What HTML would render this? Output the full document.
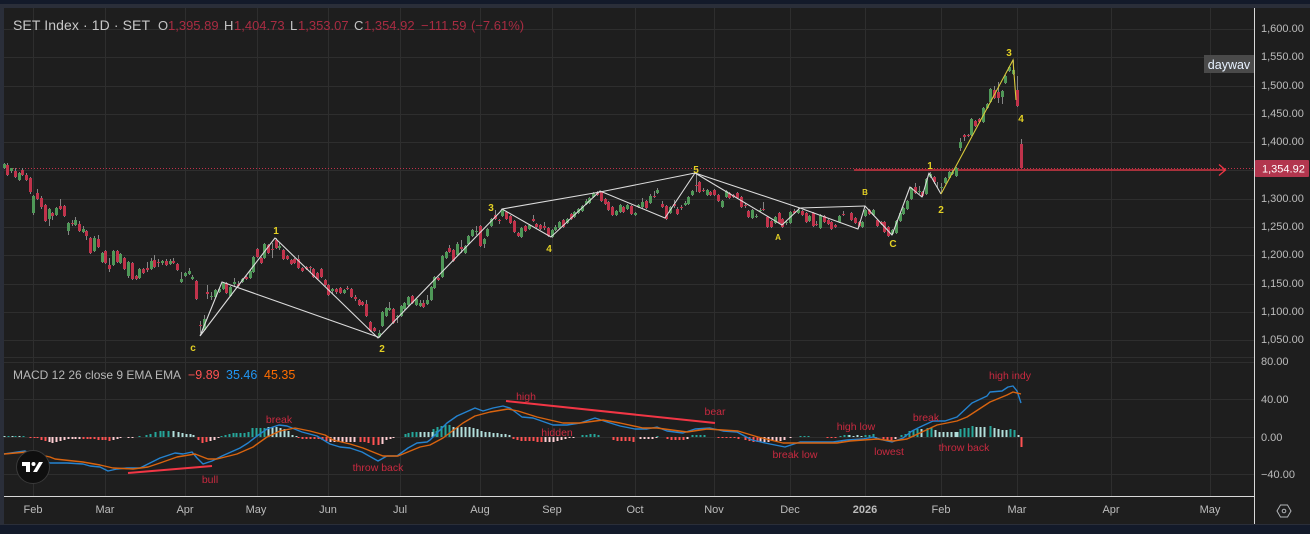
<!DOCTYPE html>
<html lang="en"><head><meta charset="utf-8"><title>SET Index chart</title>
<style>
html,body{margin:0;padding:0;background:#131a2a;width:1310px;height:534px;overflow:hidden}
svg{display:block}
text{font-family:"Liberation Sans",sans-serif}
.ax{font-size:11px;fill:#bcbcbc}
.tm{font-size:11px;fill:#bcbcbc;text-anchor:middle}
.lb{font-size:10.5px;fill:#c92a40;text-anchor:middle}
.wv{font-size:10px;font-weight:bold;fill:#e3d024;text-anchor:middle}
.lv{font-size:13px;fill:#a92c42}
.ll{font-size:13px;fill:#c4c4c4}
</style></head><body>
<svg width="1310" height="534" viewBox="0 0 1310 534" xmlns="http://www.w3.org/2000/svg">
<rect width="1310" height="534" fill="#131a2a"/>
<rect y="4" width="1310" height="4" fill="#2a2e39"/>
<rect x="0" y="4" width="4" height="521" fill="#2a2e39"/>
<rect x="4" y="8" width="1306" height="516" fill="#1e1e1e"/>
<rect y="524" width="1310" height="1" fill="#2a2e39"/>
<!-- grid -->
<path fill="none" stroke="#2e2e2e" stroke-width="1" d="M33.5 8V496M105.5 8V496M185.5 8V496M257.5 8V496M328.5 8V496M400.5 8V496M480.5 8V496M552.5 8V496M635.5 8V496M714.5 8V496M790.5 8V496M865.5 8V496M941.5 8V496M1017.5 8V496M1111.5 8V496M1210.5 8V496M4 29.5H1254M4 57.5H1254M4 86.5H1254M4 114.5H1254M4 142.5H1254M4 170.5H1254M4 199.5H1254M4 227.5H1254M4 255.5H1254M4 284.5H1254M4 312.5H1254M4 340.5H1254M4 357.5H1254M4 362.5H1254M4 399.5H1254M4 437.5H1254M4 474.5H1254"/>
<path fill="none" stroke="#d8d8d8" stroke-width="1" d="M4 496.5H1254M1254.5 8V524"/>
<!-- price lines -->
<path fill="none" stroke="#c2324b" stroke-width="1" stroke-dasharray="1 2" d="M4 168.5H1254"/>
<path fill="none" stroke="#f23645" stroke-width="1.2" d="M854 170H1225M1219 164.5L1225.5 170L1219 175.5"/>
<g transform="translate(.5 0)">
<!-- wicks -->
<path fill="none" stroke="#858585" stroke-width="1" d="M4 163V169M7 163V176M11 168V173M15 168V178M19 172V181M22 168V176M26 173V181M30 177V194M33 195V215M37 189V200M41 196V209M45 204V222M49 208V226M52 212V220M56 207V216M60 199V210M64 205V217M68 222V235M72 220V226M75 217V226M79 221V232M83 226V233M86 230V240M90 237V254M94 236V252M98 235V248M102 252V263M105 250V264M109 258V272M113 250V266M117 250V263M120 253V264M124 257V270M128 261V278M132 262V280M136 275V280M139 268V279M143 268V274M147 262V272M151 258V270M154 255V268M158 259V267M162 260V265M166 259V266M170 259V265M173 258V264M177 263V271M181 272V283M185 272V277M189 268V275M192 275V280M196 280V300M200 321V333M204 315V331M207 285V299M211 292V300M215 289V298M219 288V293M223 282V290M226 282V294M230 286V297M234 278V287M238 281V287M242 278V283M246 276V280M250 270V279M253 256V273M257 248V258M261 257V264M264 243V259M268 244V254M272 243V258M276 238V249M279 243V250M283 249V260M287 255V260M291 259V265M294 258V264M298 255V269M302 267V272M306 266V270M310 266V272M313 268V278M317 272V280M321 268V278M325 279V286M328 284V296M332 288V294M336 288V294M340 287V294M344 289V294M347 286V290M351 288V298M355 295V301M359 299V306M362 301V306M366 300V317M370 321V332M374 327V332M379 330V338M382 311V327M386 307V317M389 302V311M393 308V324M397 315V323M401 305V317M404 302V310M408 296V306M412 295V304M416 298V306M420 300V307M423 300V308M427 295V305M431 286V301M434 276V289M438 277V281M442 255V278M446 251V259M449 245V253M453 249V262M457 242V256M461 240V253M465 245V254M468 235V245M472 229V237M476 226V235M480 225V247M484 238V248M487 228V237M491 218V227M495 210V220M499 219V224M502 209V217M506 211V220M510 215V224M514 220V233M518 232V237M521 227V238M525 225V232M529 224V230M533 215V222M536 223V228M540 224V230M544 222V230M548 227V237M552 229V238M555 225V231M559 221V229M563 219V228M567 218V224M571 213V220M574 211V218M578 208V214M582 205V212M586 199V205M589 197V204M593 192V198M597 191V196M601 191V202M605 198V205M608 201V211M612 206V216M616 210V216M620 204V213M623 206V213M627 204V210M631 205V215M635 212V216M638 204V208M642 198V208M646 200V209M650 194V204M654 191V198M657 188V194M662 201V208M666 205V220M670 206V214M674 200V208M677 207V215M681 205V210M685 201V206M688 196V205M692 190V196M696 174V192M699 181V193M703 188V192M707 189V196M710 191V196M714 189V196M718 194V202M722 200V208M726 190V198M729 192V199M733 194V198M737 192V199M741 196V208M745 203V208M748 210V218M752 209V219M756 214V218M760 208V212M763 202V211M767 216V228M771 220V228M775 216V224M779 212V224M782 218V228M786 220V225M790 211V224M794 209V214M798 208V214M802 210V216M806 212V223M809 215V222M813 212V227M816 221V226M820 214V229M824 215V223M828 219V225M831 221V230M835 224V228M839 215V223M843 211V216M851 212V221M855 217V224M859 221V227M862 221V228M865 209V217M869 209V215M873 209V216M877 219V227M881 221V225M884 221V233M888 226V237M892 229V235M896 220V234M900 212V222M903 207V215M907 200V210M911 187V200M915 183V194M919 186V194M922 191V197M926 178V195M930 172V178M934 176V184M937 182V188M941 183V193M945 177V184M949 171V179M952 170V175M956 167V177M960 138V151M964 134V141M968 134V137M971 118V136M975 120V127M979 118V123M983 107V123M987 103V109M990 88V103M994 86V99M998 82V103M1002 90V104M1005 75V84M1009 66V72M1013 60V75M1017 76V107M1021 139V168"/>
<!-- green bodies -->
<path fill="none" stroke="#4f9858" stroke-width="3" d="M4 164V168M11 168V171M19 173V180M33 196V213M49 209V219M56 208V215M68 223V231M75 220V225M83 229V232M94 238V251M102 253V262M113 251V265M120 254V263M128 262V276M139 269V278M151 261V269M162 261V263M170 261V264M181 279V282M185 273V276M189 271V274M192 277V279M204 319V330M211 296V297M215 290V297M219 289V292M223 283V289M230 287V296M234 282V284M242 279V282M250 271V278M253 257V272M264 244V258M279 246V248M332 289V291M344 290V293M379 333V337M382 312V326M386 308V316M389 308V310M397 316V317M401 306V316M404 303V309M408 297V305M416 299V305M420 303V306M427 300V304M431 287V300M434 277V288M442 256V277M446 252V258M457 244V255M465 246V253M468 236V244M472 230V236M476 231V232M484 239V244M487 229V236M491 219V226M502 210V216M521 228V237M529 225V229M552 230V237M555 227V230M559 222V228M567 219V223M574 212V217M578 209V213M582 206V211M586 201V204M589 198V203M593 193V197M616 211V215M620 205V212M627 205V209M635 213V215M638 205V207M642 202V207M650 196V203M657 190V193M670 207V213M685 203V205M688 197V204M692 191V195M707 190V195M722 201V207M726 191V197M752 210V218M756 216V217M760 210V211M775 217V223M786 222V223M790 212V223M798 210V213M809 216V221M820 215V228M839 216V222M862 222V227M865 210V216M873 210V215M892 230V234M896 221V233M900 213V221M903 208V214M907 201V209M911 188V199M919 191V192M926 179V194M930 174V177M941 187V188M945 178V183M949 172V178M952 172V174M956 168V176M960 142V148M971 119V135M983 108V122M987 104V108M990 89V102M1002 91V97M1005 76V83M1009 67V71M1013 70V74"/>
<!-- red bodies -->
<path fill="none" stroke="#c0334b" stroke-width="3" d="M7 165V175M15 171V177M22 170V175M26 175V180M30 178V192M37 193V199M41 198V207M45 205V221M52 213V216M60 206V209M64 206V216M72 223V224M79 224V231M86 231V236M90 238V253M98 239V247M105 251V263M109 265V269M117 251V262M124 258V269M132 263V279M136 276V279M143 269V273M147 268V270M154 260V267M158 262V263M166 261V265M173 261V263M177 264V270M196 281V299M200 325V326M207 292V294M226 283V293M238 284V286M246 277V279M257 249V257M261 258V263M268 245V253M272 249V250M276 240V248M283 250V259M287 256V259M291 260V264M294 259V263M298 259V268M302 268V271M306 267V269M310 267V268M313 269V277M317 273V279M321 269V277M325 280V285M328 285V295M336 289V292M340 288V293M347 288V289M351 289V297M355 297V299M359 300V305M362 302V305M366 304V316M370 322V331M374 328V331M393 309V323M412 296V303M423 303V307M438 278V280M449 248V252M453 250V261M461 247V249M480 226V246M495 215V219M499 220V221M506 212V219M510 216V223M514 221V232M518 233V236M525 226V231M533 219V221M536 224V227M540 225V229M544 226V228M548 228V236M563 220V227M571 214V219M597 193V195M601 192V201M605 199V204M608 202V210M612 207V215M623 207V212M631 206V214M646 201V208M654 196V197M662 204V207M666 206V219M674 204V206M677 209V214M681 207V208M696 185V186M699 182V192M703 190V191M710 192V195M714 190V195M718 195V201M729 193V198M733 195V197M737 193V198M741 197V207M745 205V206M748 211V217M763 209V210M767 217V227M771 221V227M779 213V223M782 219V227M794 211V213M802 211V215M806 213V222M813 213V226M816 224V225M824 216V222M828 220V224M831 222V229M835 225V227M843 214V215M851 213V220M855 218V223M859 222V226M869 210V214M877 220V226M881 222V224M884 222V232M888 227V236M915 187V193M922 192V196M934 177V182M964 135V137M968 135V136M975 121V126M979 119V122M994 90V98M998 92V98M1017 90V106M1021 144V168"/>
</g>
<!-- wave lines -->
<g fill="none" stroke="#dcdcdc" stroke-width="1.1" stroke-linejoin="round">
<path d="M200 336L222 282L378 337M200 336L238 286L275 238L378 338L500 212L502 209L551 237L600 191L665 218L695 173L782 225L800 208L858 229L865 206L892 235L910 187L922 197L929 173L941 194"/>
<path d="M502 209L600 192L695 173L800 208L865 206"/>
</g>
<path fill="none" stroke="#d8c93a" stroke-width="1.1" d="M941 194L1013 60L1016 100"/>
<!-- wave labels -->
<text class="wv" x="276" y="234">1</text><text class="wv" x="382" y="352">2</text><text class="wv" x="193" y="351">c</text><text class="wv" x="491" y="211">3</text><text class="wv" x="549" y="252">4</text><text class="wv" x="696" y="173">5</text><text class="wv" x="778" y="240" style="font-size:8px">A</text><text class="wv" x="865" y="195" style="font-size:8px">B</text><text class="wv" x="893" y="247">C</text><text class="wv" x="930" y="169">1</text><text class="wv" x="941" y="213">2</text><text class="wv" x="1009" y="56">3</text><text class="wv" x="1021" y="122">4</text>
<!-- MACD histogram -->
<g fill="none" stroke-width="2" transform="translate(.5 0)">
<path stroke="#26a69a" d="M8 436V437M15 436V437M23 436V437M139 436V437M146 435V437M150 434V437M155 432V437M160 431V437M163 431V437M168 431V437M221 436V437M225 435V437M229 434V437M233 433V437M236 433V437M240 433V437M244 433V437M248 432V437M252 428V437M256 428V437M260 428V437M264 428V437M405 434V437M408 433V437M412 432V437M416 432V437M436 431V437M433 429V437M437 427V437M441 426V437M445 425V437M449 425V437M582 435V437M586 435V437M590 434V437M594 434V437M598 435V437M657 436V437M692 435V437M696 435V437M700 435V437M704 435V437M800 436V437M804 436V437M808 436V437M840 436V437M844 435V437M848 435V437M865 435V437M869 435V437M873 434V437M901 435V437M905 434V437M909 431V437M913 430V437M917 429V437M927 428V437M931 428V437M960 429V437M964 428V437M968 428V437M972 426V437M990 426V437M1010 429V437M1014 430V437"/>
<path stroke="#b2dfdb" d="M4 436V437M12 436V437M19 436V437M173 431V437M178 432V437M182 433V437M186 434V437M190 434V437M193 435V437M268 427V437M272 427V437M276 427V437M280 428V437M284 429V437M288 431V437M292 435V437M296 436V437M420 432V437M424 432V437M428 432V437M432 432V437M453 427V437M457 427V437M461 427V437M465 427V437M469 427V437M473 428V437M477 429V437M481 431V437M485 432V437M489 432V437M493 433V437M497 433V437M501 434V437M505 434V437M509 435V437M849 435V437M853 436V437M857 435V437M861 436V437M921 429V437M935 430V437M939 432V437M943 432V437M947 432V437M951 432V437M955 432V437M957 432V437M976 427V437M980 427V437M984 427V437M994 428V437M998 429V437M1002 430V437M1006 430V437M1018 435V437"/>
<path stroke="#ff5252" d="M30 437V438M34 437V438M37 437V438M41 437V440M45 437V441M83 437V439M87 437V439M90 437V439M94 437V439M98 437V440M102 437V440M105 437V440M109 437V441M198 437V440M202 437V443M206 437V442M298 437V438M302 437V439M306 437V439M310 437V439M314 437V439M318 437V439M322 437V440M326 437V441M360 437V442M364 437V442M368 437V443M373 437V445M378 437V445M513 437V439M517 437V440M521 437V441M525 437V441M529 437V441M533 437V441M537 437V442M541 437V442M613 437V440M617 437V441M621 437V441M625 437V441M629 437V441M633 437V442M667 437V439M671 437V440M675 437V440M679 437V440M683 437V440M718 437V438M722 437V438M726 437V438M730 437V438M734 437V438M738 437V439M745 437V440M749 437V441M753 437V442M757 437V442M827 437V438M831 437V438M835 437V438M883 437V439M887 437V440M891 437V440M1021 437V447"/>
<path stroke="#ffcdd2" d="M49 437V442M52 437V443M56 437V442M60 437V441M64 437V440M68 437V439M72 437V439M75 437V439M79 437V439M113 437V440M117 437V439M120 437V438M128 437V438M132 437V438M210 437V441M214 437V440M218 437V438M330 437V442M334 437V442M338 437V442M342 437V442M346 437V442M350 437V442M354 437V442M382 437V444M386 437V440M390 437V439M393 437V438M545 437V442M549 437V442M553 437V442M557 437V441M561 437V440M565 437V439M569 437V438M573 437V438M640 437V439M644 437V439M648 437V439M652 437V439M656 437V438M687 437V439M760 437V442M764 437V442M768 437V442M772 437V441M776 437V441M780 437V441M784 437V440M790 437V438M875 437V438M895 437V439"/>
</g>
<!-- MACD lines -->
<path fill="none" stroke="#2583d0" stroke-width="1.4" stroke-linejoin="round" d="M4 454L25 451L50 463L67 463L83 464L90 466L100 467L108 471L117 469L127 468L140 468L148 464L160 458L175 453L183 454L192 452L197 458L203 464L212 461L222 456L240 448L248 443L257 436L267 429L279 425L287 426L302 432L317 436L330 444L340 447L350 448L362 452L378 461L387 456L397 456L408 448L417 443L427 442L430 440L447 423L457 416L475 408L483 411L493 408L503 406L510 408L522 417L533 418L553 425L567 425L580 423L595 418L607 422L620 426L635 429L647 429L657 427L667 431L683 433L695 429L710 428L723 431L737 432L752 440L770 444L785 447L800 442L833 442L847 440L863 439L873 437L883 440L892 442L903 438L912 431L920 427L933 421L945 421L957 417L972 403L987 396L990 392L1002 391L1008 387L1013 386L1017 391L1021 403"/>
<path fill="none" stroke="#d9640f" stroke-width="1.4" stroke-linejoin="round" d="M4 454L27 452L50 457L55 459L83 462L100 465L113 468L133 469L148 467L160 463L177 457L195 454L208 459L217 459L237 454L253 447L267 437L280 431L295 428L310 431L325 435L333 440L350 444L363 448L383 456L398 456L420 447L430 445L443 438L463 423L475 416L490 412L508 409L518 411L537 417L563 423L580 423L603 420L620 423L643 428L657 428L687 432L707 429L738 431L758 437L783 443L797 443L837 443L850 441L877 439L893 441L907 439L922 432L937 425L957 421L967 417L990 402L1007 395L1013 392L1021 394"/>
<path fill="none" stroke="#f23645" stroke-width="2" d="M128 473L212 466M506 401L715 423"/>
<!-- MACD labels -->
<text class="lb" x="210" y="483">bull</text><text class="lb" x="279" y="423">break</text><text class="lb" x="378" y="471">throw back</text><text class="lb" x="526" y="400">high</text><text class="lb" x="557" y="436">hidden</text><text class="lb" x="715" y="415">bear</text><text class="lb" x="795" y="458">break low</text><text class="lb" x="856" y="430">high low</text><text class="lb" x="889" y="455">lowest</text><text class="lb" x="926" y="421">break</text><text class="lb" x="964" y="451">throw back</text><text class="lb" x="1010" y="379">high indy</text>
<!-- Logo -->
<circle cx="33" cy="467" r="16.5" fill="#0f0f0f" stroke="#3a3a3a" stroke-width="1"/>
<path fill="#fff" d="M22 462H30V472H26V466H22ZM43 462L37 472H33L39 462Z"/><circle cx="33.5" cy="464" r="2" fill="#fff"/>
<!-- Legends -->
<text x="13" y="30" style="font-size:14px" fill="#c8c8c8" textLength="137" lengthAdjust="spacing">SET Index · 1D · SET</text>
<text class="ll" x="158" y="30">O</text><text class="lv" x="168" y="30">1,395.89</text>
<text class="ll" x="224" y="30">H</text><text class="lv" x="234" y="30">1,404.73</text>
<text class="ll" x="290" y="30">L</text><text class="lv" x="298" y="30">1,353.07</text>
<text class="ll" x="354" y="30">C</text><text class="lv" x="364" y="30">1,354.92</text>
<text class="lv" x="421" y="30">−111.59</text><text class="lv" x="471" y="30">(−7.61%)</text>
<text x="13" y="379" style="font-size:12px" fill="#b8b8b8">MACD 12 26 close 9 EMA EMA</text>
<text x="188" y="379" style="font-size:12.5px" fill="#ff5252">−9.89</text>
<text x="226" y="379" style="font-size:12.5px" fill="#2196f3">35.46</text>
<text x="264" y="379" style="font-size:12.5px" fill="#ff6d00">45.35</text>
<!-- Price axis -->
<text class="ax" x="1261" y="32">1,600.00</text><text class="ax" x="1261" y="60">1,550.00</text><text class="ax" x="1261" y="89">1,500.00</text><text class="ax" x="1261" y="117">1,450.00</text><text class="ax" x="1261" y="145">1,400.00</text><text class="ax" x="1261" y="202">1,300.00</text><text class="ax" x="1261" y="230">1,250.00</text><text class="ax" x="1261" y="258">1,200.00</text><text class="ax" x="1261" y="287">1,150.00</text><text class="ax" x="1261" y="315">1,100.00</text><text class="ax" x="1261" y="343">1,050.00</text>
<text class="ax" x="1261" y="365">80.00</text><text class="ax" x="1261" y="403">40.00</text><text class="ax" x="1261" y="441">0.00</text><text class="ax" x="1261" y="478">−40.00</text>
<rect x="1255" y="160" width="54" height="17" rx="1" fill="#b2364e"/>
<text x="1262" y="172.5" style="font-size:11px" fill="#fff">1,354.92</text>
<rect x="1204" y="55" width="50" height="18" fill="#4a4a4a"/>
<text x="1229" y="69" style="font-size:12.5px" fill="#e8f2ff" text-anchor="middle">daywav</text>
<!-- Time axis -->
<text class="tm" x="33" y="513">Feb</text><text class="tm" x="105" y="513">Mar</text><text class="tm" x="185" y="513">Apr</text><text class="tm" x="256" y="513">May</text><text class="tm" x="328" y="513">Jun</text><text class="tm" x="400" y="513">Jul</text><text class="tm" x="480" y="513">Aug</text><text class="tm" x="552" y="513">Sep</text><text class="tm" x="635" y="513">Oct</text><text class="tm" x="714" y="513">Nov</text><text class="tm" x="790" y="513">Dec</text><text class="tm" x="865" y="513" style="font-weight:bold">2026</text><text class="tm" x="941" y="513">Feb</text><text class="tm" x="1017" y="513">Mar</text><text class="tm" x="1111" y="513">Apr</text><text class="tm" x="1210" y="513">May</text>
<!-- Settings icon -->
<path fill="none" stroke="#b2b5b8" stroke-width="1" d="M1277 511L1280.5 505H1287.5L1291 511L1287.5 517H1280.5Z"/><circle cx="1284" cy="511" r="1.8" fill="none" stroke="#b2b5b8"/>
</svg>
</body></html>
